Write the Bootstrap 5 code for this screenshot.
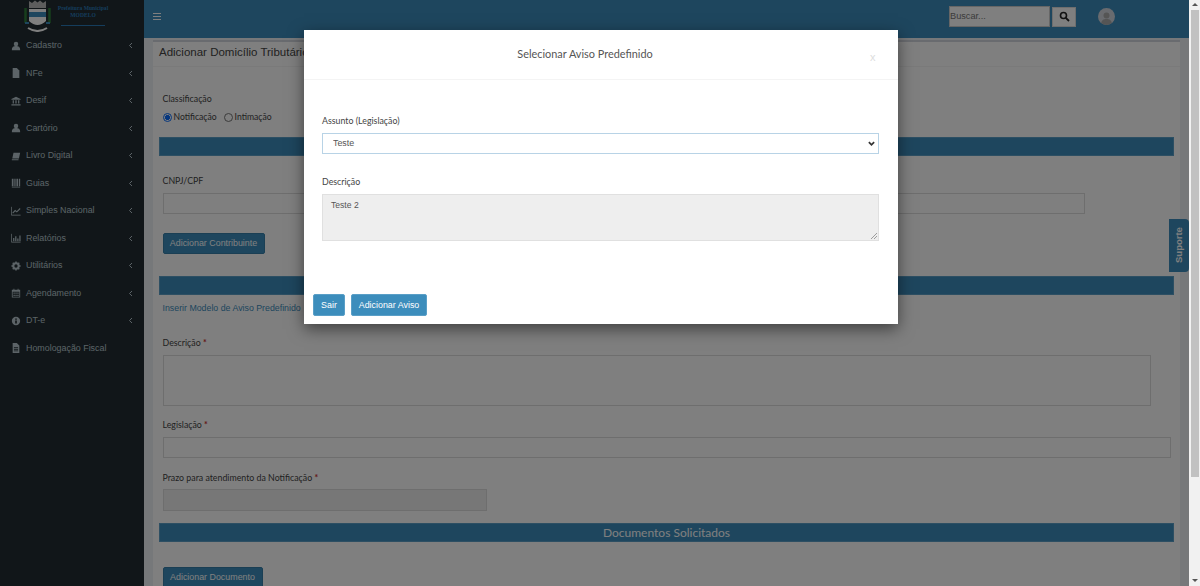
<!DOCTYPE html>
<html lang="pt-BR">
<head>
<meta charset="utf-8">
<title>Selecionar Aviso Predefinido</title>
<link href="https://cdn.jsdelivr.net/npm/bootstrap@5.3.0/dist/css/bootstrap.min.css" rel="stylesheet">
<style>
html,body{height:586px;overflow:hidden;margin:0}
body{font-family:"Liberation Sans",Arial,sans-serif;background:#ecf0f5;color:#333;font-size:12px}
.shell{height:586px}
.stage{position:relative;overflow:hidden;width:1189px;height:586px;flex:none}
.vbar{width:11px;height:586px;background:#f1f1f1;padding:3px 0 3px 2px}
.vthumb{width:8px;height:467px;background:#c1c1c1;margin-top:4px}
.arrow-up,.arrow-dn{width:0;height:0;border-left:3px solid transparent;border-right:3px solid transparent;margin-left:1px}
.arrow-up{border-bottom:3px solid #555}
.arrow-dn{border-top:3px solid #555;margin-top:auto;margin-bottom:1px}
.side{width:144px;height:586px;background:#222d32;flex:none}
.brand{height:32px;flex:none;padding-left:24px}
.brand svg{flex:none}
.brand-txt{color:#2a7ab8;font-size:5.6px;line-height:7px;font-weight:700;text-align:center;width:54px;margin-left:5px;padding-top:5px;font-family:"Liberation Serif",serif;white-space:nowrap}
.brand-rule{height:1px;background:#2a7ab8;width:44px;margin:6px auto 0}
.menu-row{height:27.5px;flex:none;padding-left:11px;padding-right:10px;color:#b8c7ce;font-size:8.9px}
.menu-row svg{width:10px;height:10px;flex:none;fill:#b8c7ce}
.menu-row span{margin-left:5px}
.menu-row svg.caret{margin-left:auto;width:7px;height:7px}
.topbar{height:38px;flex:none;background:#3c8dbc;padding:0 0 5px 9px}
.search-inp{width:101px;height:21px;background:#fff;border:1px solid #ccc;font-size:9.2px;padding:0;color:#777;line-height:19px}
.search-btn{width:24px;height:20px;background:#fff;border:1px solid #ddd;margin-left:2px}
.avatar{width:17px;height:17px;border-radius:50%;background:#d2d6de;margin-left:22px;overflow:hidden;margin-right:74px}
.body-area{padding:2px 9px 0 9px;flex:none}
.box{background:#fff;border-top:2px solid #d2d6de;height:600px}
.box-title{height:25px;padding-left:6px;padding-bottom:3px;font-size:11.5px;color:#444;border-bottom:1px solid #f4f4f4}
.lbl{font-family:Lato,"Noto Sans",sans-serif;font-size:8.8px;color:#444;font-weight:400;margin:0;line-height:13px}
.req{color:#c9302c;font-weight:700}
.radio-row{font-family:Lato,"Noto Sans",sans-serif;font-size:8.6px;color:#444;margin:5.5px 0 0 0;height:14px;gap:2px}
.radio-dot{width:9px;height:9px;border-radius:50%;border:1px solid #777;display:inline-block;flex:none;background:#fff}
.radio-dot.on{border:1px solid #0d6efd;background:radial-gradient(circle,#0d6efd 45%,#fff 50%)}
.radio-next{margin-left:5px}
.banner{background:#3c8dbc;height:19px;border:1px solid #5a9fc7;color:#fff;font-size:12px;text-align:center;line-height:17px;font-family:Lato,"Noto Sans",sans-serif;margin:0 6px}
.ctl{border:1px solid #ddd;background:#fff;height:21px;margin:0}
.pad-x{padding-left:9.5px}
.btn-azul{background:#3c8dbc;color:#fff;border:1px solid #367fa9;border-radius:2px;font-size:8.9px;padding:0;height:21px;line-height:19px;display:block}
.link-modelo{color:#3c8dbc;font-size:8.8px;line-height:12px;display:block}
.suporte{position:absolute;right:0;top:219px;width:20px;height:53px;background:#3c8dbc;border-radius:4px 0 0 4px;color:#fff;font-size:9.5px;font-weight:700;writing-mode:vertical-rl;transform:rotate(180deg);text-align:center;line-height:20px}
.veil{position:absolute;inset:0;background:#000;opacity:.5;z-index:10}
.dlg{position:absolute;left:304px;top:30px;width:594px;height:294px;background:#fff;z-index:20;box-shadow:0 5px 15px rgba(0,0,0,.5)}
.dlg-head{height:50px;border-bottom:1px solid #f4f4f4;position:relative;text-align:center;padding:16px 32px 0 0;font-family:Lato,"Noto Sans",sans-serif;font-size:10.9px;color:#555;line-height:16px}
.dlg-x{position:absolute;left:566px;top:20px;color:#ddd;font-size:11px;line-height:14px;font-family:"Liberation Sans",sans-serif}
.dlg-body{padding:34px 19px 0 18px}
.dlg-sel{height:21px;border:1px solid #b8d3e6;font-size:8.9px;color:#555;padding:0 0 0 10px;border-radius:0;background-image:url("data:image/svg+xml,%3csvg xmlns='http://www.w3.org/2000/svg' viewBox='0 0 16 16'%3e%3cpath fill='none' stroke='%23333' stroke-width='4' d='M2 5l6 6 6-6'/%3e%3c/svg%3e");background-position:right 3px center;background-size:7px 7px;margin-top:6px;line-height:19px}
.dlg-area{height:47px;background:#eee;border:1px solid #e0e0e0;color:#555;font-size:8.6px;line-height:12px;padding:4px 8px;margin-top:6px;position:relative}
.grip{position:absolute;right:1px;bottom:1px;width:7px;height:7px}
.dlg-foot{padding-left:9px;margin-top:53px;gap:6px}
.btn-dlg{background:#3c8dbc;color:#fff;border:1px solid #5a9fc7;border-radius:2px;font-size:8.9px;height:22px;line-height:20px;padding:0}
</style>
</head>
<body>
<div class="shell d-flex">
<div class="stage d-flex">
  <aside class="side d-flex flex-column">
    <div class="brand d-flex">
      <svg width="27" height="32" viewBox="0 0 27 32">
        <path d="M1.500 8v15M25.500 8v15" stroke="#2f7d3a" stroke-width="2.500" fill="none"/>
        <path d="M5 9h17v12q-8.500 8-17 0z" fill="#fff"/>
        <rect x="5" y="12" width="17" height="5" fill="#3c8dbc"/>
        <path d="M5 1l3 2 3-2.500 2.500 2 2.500-2 3 2.500 3-2v7H5z" fill="#bbb"/>
        <path d="M1 23h4M22 23h4" stroke="#3c8dbc" stroke-width="2"/>
        <path d="M4 28q9.500 6 19 0" stroke="#fff" stroke-width="2" fill="none"/>
      </svg>
      <div class="brand-txt">Prefeitura Municipal<br>MODELO<div class="brand-rule"></div></div>
    </div>
    <div class="menu-row d-flex align-items-center"><svg viewBox="0 0 12 12"><circle cx="6" cy="3.500" r="2.700"/><path d="M1 11c0-4 2-5 5-5s5 1 5 5z"/></svg><span>Cadastro</span><svg class="caret" viewBox="0 0 7 7"><path d="M5 1L2.500 3.500 5 6" stroke="#b8c7ce" fill="none"/></svg></div>
    <div class="menu-row d-flex align-items-center"><svg viewBox="0 0 12 12"><path d="M2 0h5l3 3v9H2z"/></svg><span>NFe</span><svg class="caret" viewBox="0 0 7 7"><path d="M5 1L2.500 3.500 5 6" stroke="#b8c7ce" fill="none"/></svg></div>
    <div class="menu-row d-flex align-items-center"><svg viewBox="0 0 12 12"><path d="M6 1l5.500 2.500v1H.5v-1zM2 5h1.500v4H2zM5.200 5h1.600v4H5.200zM8.500 5H10v4H8.500zM.5 10h11v1.500H.5z"/></svg><span>Desif</span><svg class="caret" viewBox="0 0 7 7"><path d="M5 1L2.500 3.500 5 6" stroke="#b8c7ce" fill="none"/></svg></div>
    <div class="menu-row d-flex align-items-center"><svg viewBox="0 0 12 12"><circle cx="6" cy="3.500" r="2.700"/><path d="M1 11c0-4 2-5 5-5s5 1 5 5z"/></svg><span>Cartório</span><svg class="caret" viewBox="0 0 7 7"><path d="M5 1L2.500 3.500 5 6" stroke="#b8c7ce" fill="none"/></svg></div>
    <div class="menu-row d-flex align-items-center"><svg viewBox="0 0 12 12"><path d="M3 2h8l-1.500 7H1.500zM1 10h8v1H1z"/></svg><span>Livro Digital</span><svg class="caret" viewBox="0 0 7 7"><path d="M5 1L2.500 3.500 5 6" stroke="#b8c7ce" fill="none"/></svg></div>
    <div class="menu-row d-flex align-items-center"><svg viewBox="0 0 12 12"><path d="M1 1h2v9H1zM4 1h1.500v9H4zM6.500 1h2v9h-2zM9.500 1h1.500v9H9.500zM1 10.500h10v1H1z"/></svg><span>Guias</span><svg class="caret" viewBox="0 0 7 7"><path d="M5 1L2.500 3.500 5 6" stroke="#b8c7ce" fill="none"/></svg></div>
    <div class="menu-row d-flex align-items-center"><svg viewBox="0 0 12 12"><path d="M.5 1v10h11" stroke="#b8c7ce" fill="none"/><path d="M2 8.500l3-3 2 1.500 4-4" stroke="#b8c7ce" stroke-width="1.300" fill="none"/></svg><span>Simples Nacional</span><svg class="caret" viewBox="0 0 7 7"><path d="M5 1L2.500 3.500 5 6" stroke="#b8c7ce" fill="none"/></svg></div>
    <div class="menu-row d-flex align-items-center"><svg viewBox="0 0 12 12"><path d="M.5 1v10h11" stroke="#b8c7ce" fill="none"/><path d="M2.500 6h1.500v4H2.500zM5 4h1.500v6H5zM7.500 6.500H9V10H7.500zM10 3h1.500v7H10z"/></svg><span>Relatórios</span><svg class="caret" viewBox="0 0 7 7"><path d="M5 1L2.500 3.500 5 6" stroke="#b8c7ce" fill="none"/></svg></div>
    <div class="menu-row d-flex align-items-center"><svg viewBox="0 0 12 12"><circle cx="6" cy="6" r="3.200" fill="none" stroke="#b8c7ce" stroke-width="2.400"/><path d="M6 .5v11M.5 6h11M2.100 2.100l7.800 7.800M9.900 2.100l-7.800 7.800" stroke="#b8c7ce" stroke-width="1.800" stroke-dasharray="2 7 2" fill="none"/></svg><span>Utilitários</span><svg class="caret" viewBox="0 0 7 7"><path d="M5 1L2.500 3.500 5 6" stroke="#b8c7ce" fill="none"/></svg></div>
    <div class="menu-row d-flex align-items-center"><svg viewBox="0 0 12 12"><path d="M1 2h2V.800h1V2h4V.800h1V2h2v9.500H1zM2 4.500v6h8v-6z" fill-rule="evenodd"/><path d="M3 5.500h1.500v1.500H3zM5.300 5.500h1.500v1.500H5.300zM7.600 5.500h1.500v1.500H7.600zM3 8h1.500v1.500H3zM5.300 8h1.500v1.500H5.300zM7.600 8h1.500v1.500H7.600z"/></svg><span>Agendamento</span><svg class="caret" viewBox="0 0 7 7"><path d="M5 1L2.500 3.500 5 6" stroke="#b8c7ce" fill="none"/></svg></div>
    <div class="menu-row d-flex align-items-center"><svg viewBox="0 0 12 12"><path fill-rule="evenodd" d="M6 1a5 5 0 1 0 0 10A5 5 0 0 0 6 1zM5 3h2v1.500H5zM5 5.500h2V9H5z"/></svg><span>DT-e</span><svg class="caret" viewBox="0 0 7 7"><path d="M5 1L2.500 3.500 5 6" stroke="#b8c7ce" fill="none"/></svg></div>
    <div class="menu-row d-flex align-items-center"><svg viewBox="0 0 12 12"><path fill-rule="evenodd" d="M2 0h5l3 3v9H2zM3.500 5v1h5V5zM3.500 7v1h5V7zM3.500 9v1h5V9z"/></svg><span>Homologação Fiscal</span></div>
  </aside>
  <div class="flex-grow-1 d-flex flex-column">
    <header class="topbar d-flex align-items-center">
      <svg width="8" height="7" viewBox="0 0 8 7"><path d="M0 .5h8M0 3.500h8M0 6.500h8" stroke="#fff" stroke-width="1"/></svg>
      <div class="search-inp ms-auto">Buscar...</div>
      <div class="search-btn d-flex align-items-center justify-content-center"><svg width="11" height="11" viewBox="0 0 11 11"><circle cx="4.500" cy="4.500" r="3" fill="none" stroke="#222" stroke-width="1.600"/><path d="M6.800 6.800L10 10" stroke="#222" stroke-width="1.800"/></svg></div>
      <div class="avatar"><svg width="17" height="17" viewBox="0 0 17 17"><circle cx="8.500" cy="6.500" r="3" fill="#aaa"/><path d="M3 16c0-5 2.500-6 5.500-6s5.500 1 5.500 6z" fill="#aaa"/></svg></div>
    </header>
    <div class="body-area">
      <section class="box">
        <div class="box-title d-flex align-items-center">Adicionar Domicílio Tributário</div>
        <div class="pad-x" style="padding-top:24.5px">
          <p class="lbl">Classificação</p>
          <div class="radio-row d-flex align-items-center"><i class="radio-dot on"></i>Notificação <i class="radio-dot radio-next"></i>Intimação</div>
        </div>
        <div class="banner" style="margin-top:13px"></div>
        <div class="pad-x">
          <p class="lbl" style="margin-top:17.5px">CNPJ/CPF</p>
          <div class="ctl" style="margin-top:6.5px;width:922px"></div>
          <button class="btn btn-azul" style="margin-top:19px;width:102px">Adicionar Contribuinte</button>
        </div>
        <div class="banner" style="margin-top:22px"></div>
        <div class="pad-x">
          <a class="link-modelo text-decoration-none" style="margin-top:7px">Inserir Modelo de Aviso Predefinido</a>
          <p class="lbl" style="margin-top:21.5px">Descrição <span class="req">*</span></p>
          <div class="ctl" style="height:51.5px;margin-top:6px;width:988px"></div>
          <p class="lbl" style="margin-top:11.5px">Legislação <span class="req">*</span></p>
          <div class="ctl" style="margin-top:6.5px;width:1008px"></div>
          <p class="lbl" style="margin-top:12.5px">Prazo para atendimento da Notificação <span class="req">*</span></p>
          <div class="ctl" style="margin-top:5.5px;width:324px;background:#eee;height:22px"></div>
        </div>
        <div class="banner" style="margin-top:12px">Documentos Solicitados</div>
        <div class="pad-x">
          <button class="btn btn-azul" style="margin-top:25px;width:100px">Adicionar Documento</button>
        </div>
      </section>
    </div>
  </div>
  <div class="suporte">Suporte</div>
  <div class="veil"></div>
  <div class="dlg">
    <div class="dlg-head">Selecionar Aviso Predefinido<span class="dlg-x">x</span></div>
    <div class="dlg-body">
      <label class="lbl d-block">Assunto (Legislação)</label>
      <select class="form-select dlg-sel"><option>Teste</option></select>
      <label class="lbl d-block" style="margin-top:21px">Descrição</label>
      <div class="dlg-area">Teste 2<svg class="grip" viewBox="0 0 7 7"><path d="M1 7l6-6M4 7l3-3" stroke="#888" stroke-width=".8"/></svg></div>
    </div>
    <div class="dlg-foot d-flex">
      <button class="btn btn-dlg" style="width:32px">Sair</button>
      <button class="btn btn-dlg" style="width:76px">Adicionar Aviso</button>
    </div>
  </div>
</div>
<div class="vbar d-flex flex-column"><div class="arrow-up"></div><div class="vthumb"></div><div class="arrow-dn"></div></div>
</div>
<script src="https://cdn.jsdelivr.net/npm/bootstrap@5.3.0/dist/js/bootstrap.bundle.min.js"></script>
</body>
</html>
